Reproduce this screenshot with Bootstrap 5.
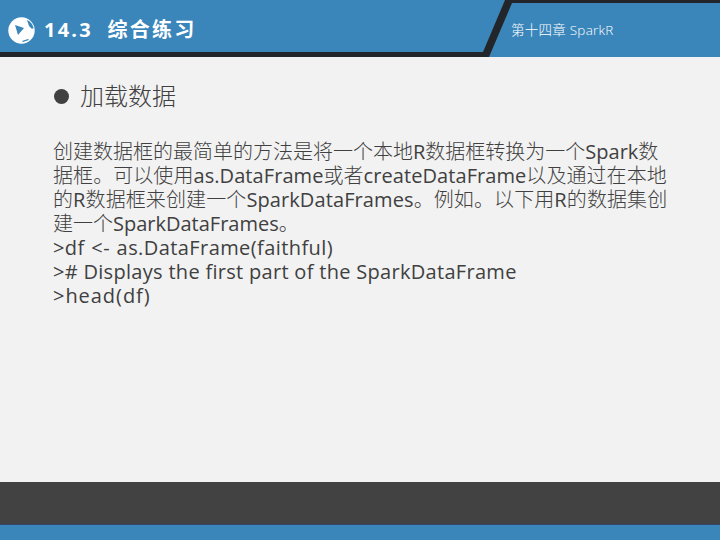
<!DOCTYPE html>
<html lang="zh">
<head>
<meta charset="utf-8">
<title>14.3 综合练习</title>
<link href="https://cdn.jsdelivr.net/npm/bootstrap@5.3.0/dist/css/bootstrap.min.css" rel="stylesheet">
<style>
html,body{height:540px;overflow:hidden}
body{width:720px;background:#f2f2f2;color:#404040;font-family:"Open Sans","Noto Sans CJK SC",sans-serif}
.slide-head{height:57px;background:#3a86ba;border-bottom:5px solid #22262b;color:#fff;padding-top:8px}
.head-deco{position:absolute;left:0;top:0}
.head-title{font-size:20px;font-weight:700;letter-spacing:2.2px;line-height:1;padding-left:9px}
.head-chapter{position:absolute;left:511px;top:21px;font-size:13.5px;line-height:18px;font-weight:300;letter-spacing:.25px}
.slide-main{padding:25px 0 0 54px}
.sub-head{font-size:24px;line-height:28px;font-weight:300;color:#404040}
.dot{width:15px;height:15px;background:#404040;border-radius:50%;margin-right:11px}
.body-copy{margin:30px 0 0 -1px;font-size:20px;line-height:24px;width:640px;white-space:nowrap;font-weight:400}
.cjk{font-weight:300}
.ln-a{letter-spacing:.07px}
.ln-e{letter-spacing:.1px}
.ln-b{letter-spacing:.42px;word-spacing:1px}
.ln-c{letter-spacing:.3px}
.ln-d{letter-spacing:.95px}
.foot-dark{height:43px;background:#424242;border-bottom:1px solid #34456a}
.foot-blue{height:15px;background:#3a86ba}
</style>
</head>
<body class="d-flex flex-column">
<header class="slide-head position-relative d-flex align-items-center flex-shrink-0">
  <svg class="head-deco" width="720" height="57" viewBox="0 0 720 57" aria-hidden="true">
    <rect x="484" y="0" width="236" height="57" fill="#3a86ba"/>
    <polygon points="0,52 483,52 505,0 720,0 720,3 512,3 489,57 0,57" fill="#22262b"/>
  </svg>
  <svg class="position-relative ms-2" width="27" height="27" viewBox="0 0 27 27" aria-hidden="true">
    <circle cx="13.5" cy="13.5" r="13.2" fill="#fff"/>
    <path d="M7 8 L16 11 L10 18 Z" fill="#3a86ba"/>
    <path d="M19 3 L21 9 L24 12 L25.6 11 Q24 5 19 3 Z" fill="#3a86ba"/>
    <path d="M14 24 L20 22 L21 23 L15 25 Z" fill="#3a86ba"/>
  </svg>
  <div class="head-title position-relative">14.3&nbsp; 综合练习</div>
  <div class="head-chapter">第十四章 SparkR</div>
</header>
<main class="slide-main flex-grow-1">
  <div class="d-flex align-items-center sub-head"><span class="dot"></span><span>加载数据</span></div>
  <p class="body-copy"><span class="cjk">创建数据框的最简单的方法是将一个本地</span>R<span class="cjk">数据框转换为一个</span>Spark<span class="cjk">数</span><br><span class="ln-a"><span class="cjk">据框。可以使用</span>as.DataFrame<span class="cjk">或者</span>createDataFrame<span class="cjk">以及通过在本地</span></span><br><span class="ln-e"><span class="cjk">的</span>R<span class="cjk">数据框来创建一个</span>SparkDataFrames<span class="cjk">。例如。以下用</span>R<span class="cjk">的数据集创</span></span><br><span class="cjk">建一个</span>SparkDataFrames<span class="cjk">。</span><br><span class="ln-b">&gt;df &lt;- as.DataFrame(faithful)</span><br><span class="ln-c">&gt;# Displays the first part of the SparkDataFrame</span><br><span class="ln-d">&gt;head(df)</span></p>
</main>
<div class="foot-dark flex-shrink-0"></div>
<div class="foot-blue flex-shrink-0"></div>
</body>
</html>
